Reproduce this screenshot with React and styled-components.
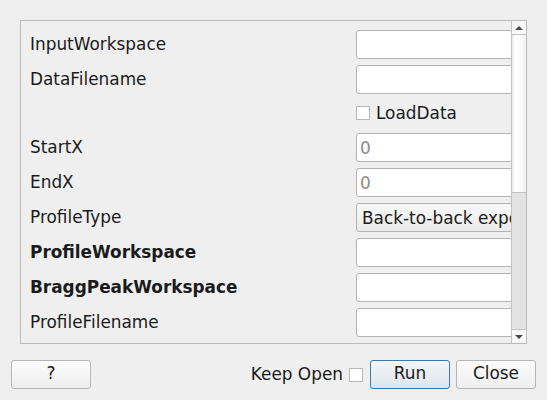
import React from "react";
import styled, { createGlobalStyle } from "styled-components";

const Global = createGlobalStyle`
  html, body { margin: 0; padding: 0; background: #efefef; }
  body { font-family: "DejaVu Sans", sans-serif; font-size: 16.9px; color: #1b1b1b; }
  #root { width: 547px; height: 400px; }
`;

const Dialog = styled.div`
  box-sizing: border-box;
  width: 547px;
  height: 400px;
  padding: 11px;
  display: flex;
  flex-direction: column;
`;

const Body = styled.div`
  padding: 9px;
  flex: 1;
  display: flex;
  min-height: 0;
`;

const ScrollFrame = styled.div`
  flex: 1;
  display: flex;
  border: 1px solid #bababa;
  min-height: 0;
  overflow: hidden;
`;

const Viewport = styled.div`
  flex: 1;
  overflow: hidden;
  min-width: 0;
`;

const Form = styled.div`
  display: grid;
  grid-template-columns: 320px 240px;
  column-gap: 6px;
  row-gap: 6px;
  padding: 9px;
  align-items: center;
`;

const Label = styled.div`
  font-weight: ${(p) => (p.$bold ? "bold" : "normal")};
  white-space: nowrap;
  line-height: 29px;
`;

const Input = styled.div`
  box-sizing: border-box;
  height: 29px;
  background: #ffffff;
  border: 1px solid #b3b3b3;
  border-radius: 3px;
  padding-left: 3px;
  display: flex;
  align-items: center;
  color: #8c8c8c;
  white-space: nowrap;
`;

const Combo = styled.div`
  box-sizing: border-box;
  height: 29px;
  background: linear-gradient(#f7f7f7, #ebebeb);
  border: 1px solid #b3b3b3;
  border-radius: 3px;
  padding-left: 5px;
  display: flex;
  align-items: center;
  white-space: nowrap;
  overflow: hidden;
`;

const CheckRow = styled.label`
  grid-column: 2;
  box-sizing: border-box;
  height: 27px;
  padding-bottom: 2px;
  display: flex;
  align-items: center;
  gap: 6px;
`;

const Box = styled.span`
  box-sizing: border-box;
  width: 14px;
  height: 14px;
  background: #ffffff;
  border: 1px solid #b8b8b8;
  flex: none;
`;

const Scrollbar = styled.div`
  width: 14px;
  border-left: 1px solid #c2c2c2;
  display: flex;
  flex-direction: column;
  background: #e3e3e3;
`;

const Arrow = styled.div`
  height: 13px;
  background: #f7f7f7;
  display: flex;
  align-items: center;
  justify-content: center;
  border-top: ${(p) => (p.$down ? "1px solid #c2c2c2" : "none")};
  border-bottom: ${(p) => (p.$down ? "none" : "1px solid #c2c2c2")};
`;

const Tri = styled.span`
  width: 0;
  height: 0;
  border-left: 4px solid transparent;
  border-right: 4px solid transparent;
  ${(p) => (p.$down ? "border-top: 4px solid #4a4a4a;" : "border-bottom: 4px solid #4a4a4a;")}
`;

const Handle = styled.div`
  height: 157px;
  background: linear-gradient(to right, #e8e8e8 0px, #ffffff 3px, #fafafa 10px, #f0f0f0 14px);
  border-bottom: 1px solid #c2c2c2;
`;

const Track = styled.div`
  flex: 1;
`;

const ButtonRow = styled.div`
  height: 29px;
  margin-top: 7px;
  display: flex;
  align-items: center;
`;

const Button = styled.button`
  box-sizing: border-box;
  width: 80px;
  height: 29px;
  margin-left: ${(p) => p.$ml || 0}px;
  font: inherit;
  line-height: 1;
  color: #1b1b1b;
  border-radius: 3px;
  border: 1px solid ${(p) => (p.$primary ? "#3a78ad" : "#b5b5b5")};
  background: ${(p) =>
    p.$primary
      ? "linear-gradient(#f3f6f9, #dde5ec)"
      : "linear-gradient(#fcfcfc, #eeeeee)"};
  padding: 0 0 2px 0;
`;

const Spacer = styled.div`
  flex: 1;
`;

const KeepLabel = styled.span`
  margin-right: 6px;
  margin-top: -2px;
`;

const rows = [
  { label: "InputWorkspace", kind: "input" },
  { label: "DataFilename", kind: "input" },
  { kind: "check", label: "LoadData" },
  { label: "StartX", kind: "input", value: "0" },
  { label: "EndX", kind: "input", value: "0" },
  { label: "ProfileType", kind: "combo", value: "Back-to-back exponential" },
  { label: "ProfileWorkspace", kind: "input", bold: true },
  { label: "BraggPeakWorkspace", kind: "input", bold: true },
  { label: "ProfileFilename", kind: "input" },
  { label: "", kind: "input" },
];

export default function App() {
  return (
    <>
      <Global />
      <Dialog>
        <Body>
          <ScrollFrame>
            <Viewport>
              <Form>
                {rows.map((r, i) =>
                  r.kind === "check" ? (
                    <CheckRow key={i}>
                      <Box />
                      <span>{r.label}</span>
                    </CheckRow>
                  ) : (
                    <React.Fragment key={i}>
                      <Label $bold={r.bold}>{r.label}</Label>
                      {r.kind === "combo" ? (
                        <Combo>{r.value}</Combo>
                      ) : (
                        <Input>{r.value}</Input>
                      )}
                    </React.Fragment>
                  )
                )}
              </Form>
            </Viewport>
            <Scrollbar>
              <Arrow>
                <Tri />
              </Arrow>
              <Handle />
              <Track />
              <Arrow $down>
                <Tri $down />
              </Arrow>
            </Scrollbar>
          </ScrollFrame>
        </Body>
        <ButtonRow>
          <Button>?</Button>
          <Spacer />
          <KeepLabel>Keep Open</KeepLabel>
          <Box />
          <Button $primary $ml={7}>Run</Button>
          <Button $ml={6}>Close</Button>
        </ButtonRow>
      </Dialog>
    </>
  );
}
